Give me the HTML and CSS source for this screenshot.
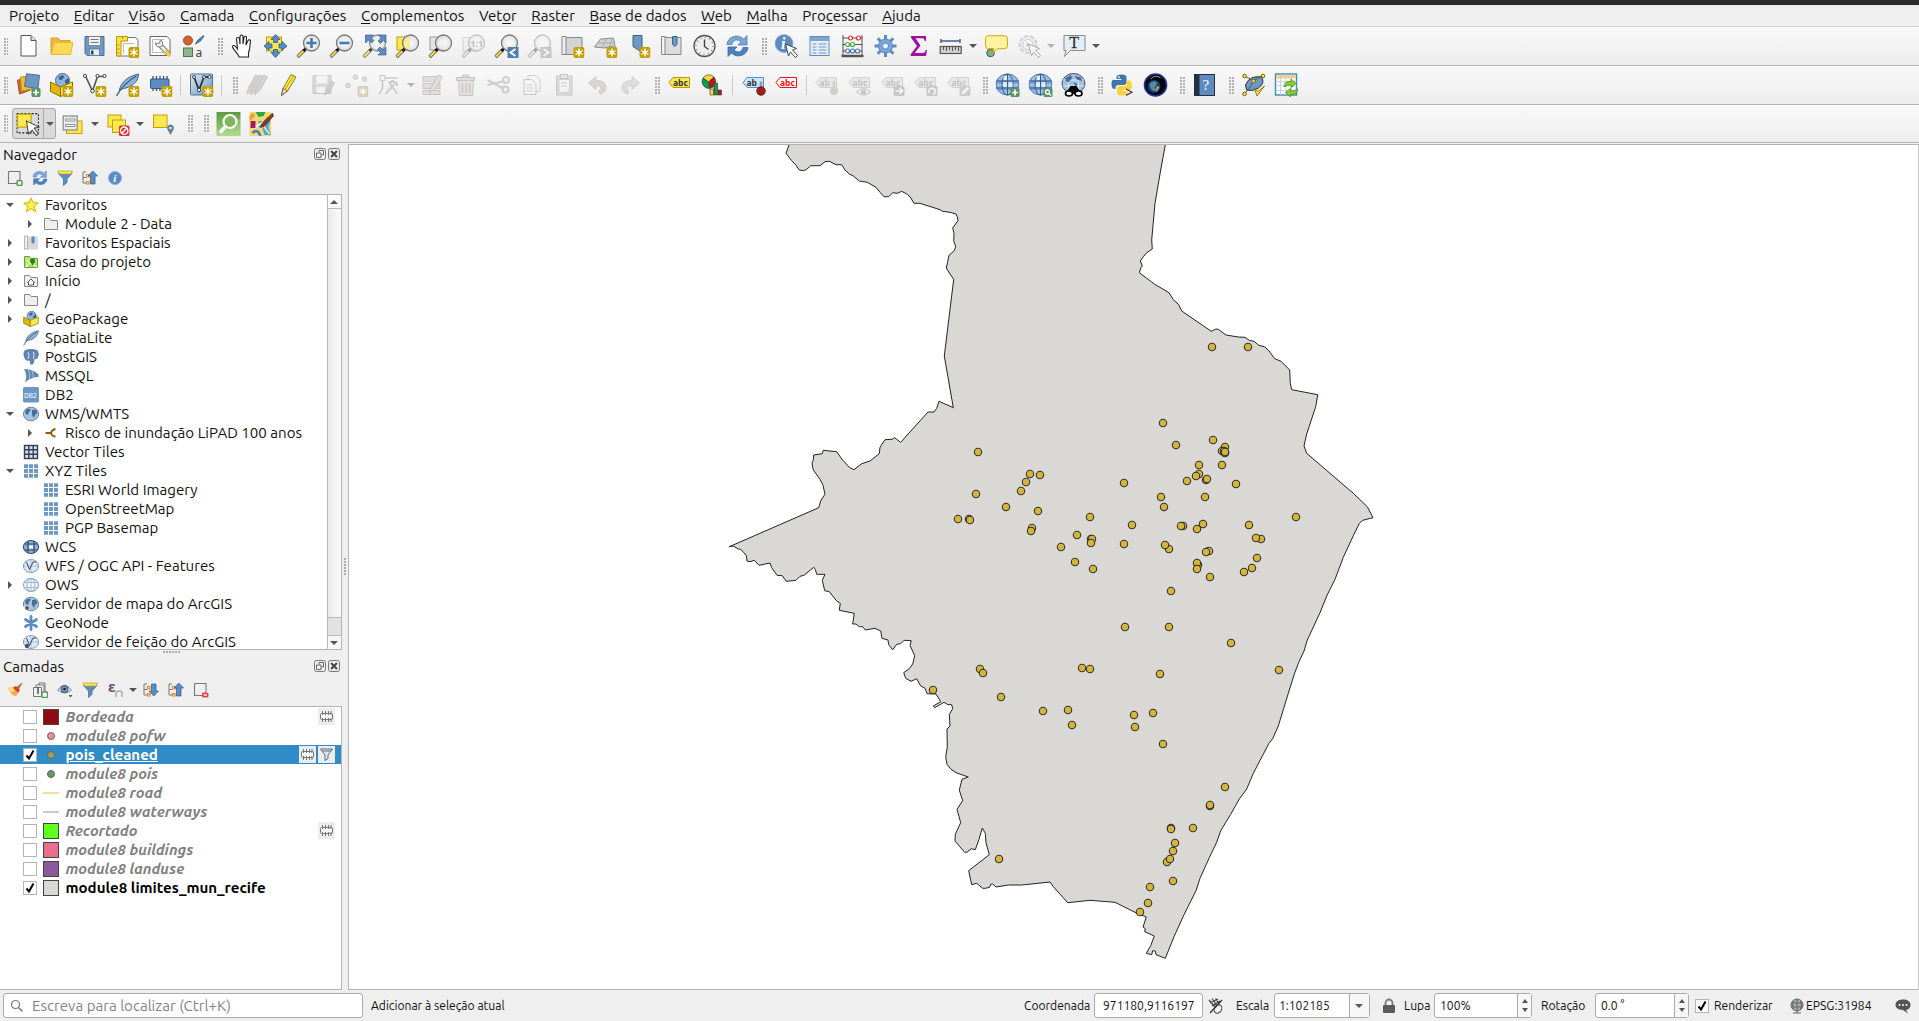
FILE: index.html
```html
<!DOCTYPE html>
<html lang="pt-BR">
<head>
<meta charset="utf-8">
<title>QGIS</title>
<link rel="stylesheet" href="styles.css">
</head>
<body>
<svg class="paints" width="0" height="0" aria-hidden="true">
  <defs>
    <linearGradient id="gBlue" x1="0" y1="0" x2="1" y2="1"><stop offset="0" stop-color="#dce9f5"/><stop offset="1" stop-color="#6d97c4"/></linearGradient>
    <radialGradient id="gLens"><stop offset="0" stop-color="#fff"/><stop offset="1" stop-color="#dcdcdc"/></radialGradient>
    <linearGradient id="gGreen" x1="0" y1="0" x2="0" y2="1"><stop offset="0" stop-color="#5d9b3e"/><stop offset="1" stop-color="#a3d57c"/></linearGradient>
  </defs>
</svg>
<svg class="defs" aria-hidden="true">
  <!-- shared parts -->
  <symbol id="star-badge" viewBox="0 0 24 24"><rect x="13" y="13" width="11" height="11" rx="2" fill="#c4a000"/><path d="M18.500 14.500v8M15 16.500l7 4M22 16.500l-7 4" stroke="#fff" stroke-width="1.400"/><circle cx="18.500" cy="18.500" r="1.800" fill="#fff"/></symbol>
  <symbol id="lens" viewBox="0 0 24 24"><path d="M1 23l7-7" stroke="#555" stroke-width="3.600"/><path d="M1.500 22.500l6-6" stroke="#fcd94a" stroke-width="2"/><path d="M7 17l3-3" stroke="#111" stroke-width="3"/><circle cx="15" cy="9" r="8" fill="url(#gLens)" fill-opacity=".85" stroke="#777" stroke-width="1.300"/></symbol>
  <symbol id="cursor" viewBox="0 0 24 24"><path d="M11 10l11 4.500-4 1.500 5 5.500-2 2-5-5.500-2 4z" fill="#fff" stroke="#444" stroke-width="1"/></symbol>
  <symbol id="tag" viewBox="0 0 24 24"><path d="M1.500 9.500l4-5H22v10H5.500z"/></symbol>

  <!-- project toolbar -->
  <symbol id="i-new" viewBox="0 0 24 24"><path d="M4.500 1.500h10l5 5v15.500h-15z" fill="#fff" stroke="#555"/><path d="M14.500 1.500v5h5" fill="#ddd" stroke="#555"/></symbol>
  <symbol id="i-open" viewBox="0 0 24 24"><path d="M1.500 20V4h7l2 2.500h10V9" fill="#e8b647" stroke="#d9a520"/><path d="M1.500 20.500L5 8.500h18.500l-2.500 12z" fill="#fcd956" stroke="#e6b93a"/></symbol>
  <symbol id="i-save" viewBox="0 0 24 24"><path d="M2.500 2.500h19v19h-17l-2-2z" fill="#6d97c4" stroke="#4b7198"/><rect x="6" y="2.500" width="12" height="9" fill="#f2f2f2" stroke="#666" stroke-width=".6"/><path d="M8 5.500h8M8 8.500h8" stroke="#777"/><rect x="7" y="15" width="10" height="6.500" fill="#e8eef5" stroke="#4b7198" stroke-width=".7"/><rect x="8.500" y="16.500" width="2.500" height="4" fill="#345"/></symbol>
  <symbol id="i-layout" viewBox="0 0 24 24"><path d="M7 3.500h13l2.500 3V22H2" fill="#fff" stroke="#777"/><path d="M8 9.500h11M8 9.500v10" stroke="#bbb" fill="none"/><path d="M1 2.500h11v4.500H5.500V22H1z" fill="#fde047" stroke="#b8960b"/><path d="M1 11h3M1 15h3M1 19h3M7 2.500v2.500" stroke="#b8960b"/><use href="#star-badge"/></symbol>
  <symbol id="i-layoutmgr" viewBox="0 0 24 24"><path d="M1.500 2.500h17l3 3V21.500h-20z" fill="#fff" stroke="#666"/><path d="M4 5.500h12M4 5.500v13h14" fill="none" stroke="#a9bddb"/><path d="M11 10.500l9 9.500" stroke="#777" stroke-width="5"/><path d="M11 10.500l9 9.500" stroke="#eee" stroke-width="3"/><path d="M16.500 16.500l5 5.500" stroke="#f0c850" stroke-width="4"/><path d="M7 9a4 4 0 006 3.500A4 4 0 0012 6l-1 3-2 .5-2-.500" fill="#eee" stroke="#777"/></symbol>
  <symbol id="i-style" viewBox="0 0 24 24"><circle cx="6.500" cy="6.500" r="4.500" fill="#d2622f" stroke="#a74a20"/><path d="M14 10l2.500-4L22 1.500l.5.500-3.500 5z" fill="#5b8bc0" stroke="#3c6591"/><rect x="2" y="14" width="9" height="8.500" fill="#8cb48e" stroke="#4d7550"/><text x="14" y="22.500" class="glyph" font-size="12" fill="#444">a</text></symbol>

  <!-- navigation toolbar -->
  <symbol id="i-pan" viewBox="0 0 24 24"><path d="M8.500 23c-.5-3-5.500-7-6.500-10 0-2 2-2 3-.5L7 15 6 5c0-2 2.500-2 3 0l.500 5V2.500c0-2 3-2 3 0V10l1-6.500c.5-2 3-1.500 2.500.500L15.500 11l2-4.500c1-1.500 3-.5 2.500 1C19 12 20 14 18 18.500V23z" fill="#fff" stroke="#222" stroke-width="1.100"/></symbol>
  <symbol id="i-pansel" viewBox="0 0 24 24"><rect x="3" y="3" width="15" height="14" fill="#fce94f" stroke="#c4a000"/><g fill="#5b8bc0" stroke="#2d5a8c" stroke-width=".8"><path d="M12 .5l4.500 5H14v3h-4v-3H7.500zM12 23.500l4.500-5H14v-3h-4v3H7.500zM.5 12l5-4.500V10h3v4h-3v2.500zM23.500 12l-5-4.500V10h-3v4h3v2.500z"/></g></symbol>
  <symbol id="i-zin" viewBox="0 0 24 24"><use href="#lens"/><path d="M15 4v10M10 9h10" stroke="#4579ad" stroke-width="2.600"/></symbol>
  <symbol id="i-zout" viewBox="0 0 24 24"><use href="#lens"/><path d="M10 9h10" stroke="#4579ad" stroke-width="2.600"/></symbol>
  <symbol id="i-zfull" viewBox="0 0 24 24"><use href="#lens" opacity=".8"/><g fill="#5b8bc0" stroke="#3a6695" stroke-width=".7"><path d="M3 1h8L8.500 3.500l3 3-2.500 2.500-3-3L3 9zM23.500 1v8L21 6.500l-3 3L15.500 7l3-3L16 1zM23.500 21h-8l2.500-2.500-3-3 2.500-2.500 3 3 3-3z"/></g></symbol>
  <symbol id="i-zsel" viewBox="0 0 24 24"><rect x="1.500" y="3" width="13" height="13" fill="#fce94f" stroke="#c4a000"/><use href="#lens"/><path d="M14 4a5.500 5.500 0 000 11z" fill="#f8ec80" opacity=".8"/></symbol>
  <symbol id="i-zlayer" viewBox="0 0 24 24"><rect x="1.500" y="3" width="13" height="13" fill="#e4e4e4" stroke="#999"/><use href="#lens"/></symbol>
  <symbol id="i-znative" viewBox="0 0 24 24"><path d="M1.500 3.500h12v14h-12z" fill="#e8e8e8" stroke="#aaa"/><use href="#lens"/><text x="9" y="12.500" class="glyph bold" font-size="9" fill="#666">1:1</text></symbol>
  <symbol id="i-zlast" viewBox="0 0 24 24"><use href="#lens"/><rect x="13" y="13" width="11" height="11" fill="#4f7fb0"/><path d="M21 15l-5 3.500 5 3.500" fill="none" stroke="#fff" stroke-width="1.800"/></symbol>
  <symbol id="i-znext" viewBox="0 0 24 24"><use href="#lens"/><rect x="13" y="13" width="11" height="11" fill="#888"/><path d="M16 15l5 3.500-5 3.500" fill="none" stroke="#fff" stroke-width="1.800"/></symbol>
  <symbol id="i-newmap" viewBox="0 0 24 24"><path d="M5 3.500h16.500v17H5z" fill="#d3d3d3" stroke="#888"/><path d="M1.500 2.500h4v18h-4z" fill="#eee" stroke="#888"/><use href="#star-badge"/></symbol>
  <symbol id="i-new3d" viewBox="0 0 24 24"><path d="M7 5l13-1 2 11-3-3-8 2-10-1z" fill="#d3d3d3" stroke="#888"/><path d="M4 9l17 0M13 4l-4 9M18 5l-2 8" stroke="#aaa"/><use href="#star-badge"/></symbol>
  <symbol id="i-newbm" viewBox="0 0 24 24"><path d="M6.500 1.500h9v17l-4.500-3-4.500-3z" fill="#6d97c4" stroke="#3f5f85"/><use href="#star-badge"/></symbol>
  <symbol id="i-bm" viewBox="0 0 24 24"><path d="M5 3.500h16.500v17H5z" fill="#dcdcdc" stroke="#888"/><path d="M2 2.500h3.500v18H2z" fill="#f4f4f4" stroke="#888"/><path d="M13 2.500h4.500v8L15 12.500l-2-2z" fill="#6d97c4" stroke="#3a6695"/></symbol>
  <symbol id="i-clock" viewBox="0 0 24 24"><circle cx="12" cy="12" r="10.500" fill="#eee" stroke="#555" stroke-width="1.300"/><circle cx="12" cy="12" r="8.500" fill="none" stroke="#5b8bc0" stroke-width="1.600" stroke-dasharray="1 3.450"/><path d="M12 5.500V12.500l4 3" fill="none" stroke="#444" stroke-width="1.400"/></symbol>
  <symbol id="i-refresh" viewBox="0 0 24 24"><path d="M1.500 10.500C2 3 12-1 18 5l3.500-3.500v9.500h-9l3-3C12 4.500 7 6 6.500 10.500z" fill="#7aa6d8" stroke="#4d7fb5" stroke-width=".8"/><path d="M22.500 13.500C22 21 12 25 6 19l-3.500 3.500v-9.500h9l-3 3c3.500 3.500 8.500 2 9-2.500z" fill="#4b82bf" stroke="#3568a5" stroke-width=".8"/></symbol>

  <!-- attributes toolbar -->
  <symbol id="i-info" viewBox="0 0 24 24"><circle cx="9.500" cy="9.500" r="8.800" fill="#5b8bc0" stroke="#7aa2ce"/><text x="6.500" y="15" class="glyph-serif bold it" font-size="16" fill="#fff">i</text><use href="#cursor"/></symbol>
  <symbol id="i-table" viewBox="0 0 24 24"><rect x="2.500" y="2.500" width="19" height="19" fill="#e5f0fa" stroke="#5b8bc0"/><path d="M2.500 5h19" stroke="#7da5cf" stroke-width="4"/><path d="M5 10h4M11 10h8M5 13h4M11 13h8M5 16h4M11 16h8M5 19h4M11 19h8" stroke="#6d97c4"/></symbol>
  <symbol id="i-abacus" viewBox="0 0 24 24"><path d="M2.500 1v22M21.500 1v22M2 4h20M2 10.500h20M2 17h20" stroke="#555"/><path d="M1 22h22" stroke="#555" stroke-width="2.500"/><g fill="#fff" stroke-width="1.200"><g stroke="#d33"><circle cx="10" cy="4" r="2"/><circle cx="18" cy="4" r="2"/></g><g stroke="#4a4"><circle cx="7" cy="10.500" r="2"/><circle cx="12" cy="10.500" r="2"/></g><g stroke="#47a"><circle cx="7" cy="17" r="2"/><circle cx="12" cy="17" r="2"/><circle cx="17" cy="17" r="2"/></g></g></symbol>
  <symbol id="i-gear" viewBox="0 0 24 24"><path d="M12 1v22M1 12h22M4.200 4.200l15.600 15.600M19.800 4.200L4.200 19.800" stroke="#5b8bc0" stroke-width="3"/><circle cx="12" cy="12" r="7" fill="#7aa6d8" stroke="#5b8bc0"/><circle cx="12" cy="12" r="3" fill="#eef3f9" stroke="#5b8bc0"/></symbol>
  <symbol id="i-sum" viewBox="0 0 24 24"><path d="M4.500 2h15v5h-1.200c-.5-2-1-2.700-3-2.700H9L14 11.500 8.200 19H16c2 0 2.800-1 3.300-3h1.200L19.500 22H4.200v-1.800L10.500 12 4.500 3.800z" fill="#a0119f"/></symbol>
  <symbol id="i-measure" viewBox="0 0 24 24"><path d="M1.500 7h19M1.500 5v4M20.500 5v4" stroke="#3a6695" stroke-width="1.500"/><rect x=".7" y="12.500" width="21" height="7" fill="#d0d0d0" stroke="#555" stroke-width="1.200"/><path d="M4 13v3M7 13v4M10 13v3M13 13v4M16 13v3M19 13v4" stroke="#555"/></symbol>
  <symbol id="i-tip" viewBox="0 0 24 24"><circle cx="6" cy="19" r="3.800" fill="#7fb07f" stroke="#555"/><path d="M4 1.700h15.500q3.500 0 3.500 3v7q0 3-3.500 3H13L8.500 19l1-4.300H4q-3 0-3-3v-7q0-3 3-3z" fill="#fcf3a0" stroke="#d0a800"/></symbol>
  <symbol id="i-action" viewBox="0 0 24 24"><circle cx="10.500" cy="10.500" r="8.500" fill="#ddd" stroke="#999" stroke-width="2" stroke-dasharray="4 2"/><circle cx="10.500" cy="10.500" r="5" fill="#fff" stroke="#999"/><path d="M9 8l4 2.500L9 13z" fill="#888"/><use href="#cursor"/></symbol>
  <symbol id="i-text" viewBox="0 0 24 24"><path d="M1.500 1.500h21v15H8l-6 6 1.500-6h-2z" fill="#e6eff6" stroke="#888"/><text x="6.800" y="14" class="glyph-serif" font-size="16" fill="#333" stroke="#333" stroke-width=".3">T</text></symbol>

  <!-- data source toolbar -->
  <symbol id="i-dsm" viewBox="0 0 24 24"><path d="M1 7l11-1 2 11-11 4z" fill="#d2622f" stroke="#a74a20"/><path d="M4 4l11-1 1 13-11 2z" fill="#f0c030" stroke="#b8960b"/><path d="M10 .8l13 1.500-1.500 13L8 13.500z" fill="#6d97c4" stroke="#4b7198"/><rect x="15" y="15" width="9" height="9" rx="1.500" fill="#589660"/><path d="M19.500 16.500v6M16.500 19.500h6" stroke="#fff" stroke-width="1.600"/></symbol>
  <symbol id="i-gpkg" viewBox="0 0 24 24"><circle cx="13" cy="7.500" r="7" fill="#8fb3da" stroke="#4b6d92"/><path d="M9 4l4-2 2 2-3 3-2 0zM15 8l4-3 1 4-3 3z" fill="#3f6186"/><path d="M1 9l10 5v9.500L1 18.500z" fill="#e0b800" stroke="#8a6f00"/><path d="M11 14l12-5v9.500l-12 5z" fill="#fce94f" stroke="#8a6f00"/></symbol>
  <symbol id="i-newgpkg" viewBox="0 0 24 24"><use href="#i-gpkg"/><use href="#star-badge"/></symbol>
  <symbol id="i-shp" viewBox="0 0 24 24"><path d="M3 3l7 15L15 3.500h7" fill="none" stroke="#555" stroke-width="1.600"/><g fill="#fff" stroke="#345" stroke-width="1"><circle cx="2.500" cy="2.800" r="1.600"/><circle cx="15" cy="3" r="1.600"/><circle cx="22" cy="3" r="1.600"/><circle cx="10" cy="18" r="1.800"/></g><use href="#star-badge"/></symbol>
  <symbol id="i-feather" viewBox="0 0 24 24"><path d="M4 17C5 11 10 4 23 1c0 7-6 13-15 14.500z" fill="#8fb3da" stroke="#3f5f85"/><path d="M1 23C6 14 12 8 21 3" fill="none" stroke="#3f5f85" stroke-width="1.400"/></symbol>
  <symbol id="i-newfeather" viewBox="0 0 24 24"><use href="#i-feather"/><use href="#star-badge"/></symbol>
  <symbol id="i-mem" viewBox="0 0 24 24"><path d="M4.500 3v15M8 3v15M11.500 3v15M15 3v15M18.500 3v15" stroke="#444" stroke-width="1.200"/><rect x="2" y="6" width="18.500" height="9.500" rx="1" fill="#5b8bc0" stroke="#33567d"/><use href="#star-badge"/></symbol>
  <symbol id="i-virtual" viewBox="0 0 24 24"><rect x="1" y="1" width="22" height="21" rx="1" fill="url(#gBlue)" stroke="#4b7198"/><path d="M4.500 4l5 13L14.500 4H20" fill="none" stroke="#333" stroke-width="1.800"/><g fill="#fff" stroke="#345"><circle cx="4.500" cy="4" r="1.500"/><circle cx="14.500" cy="4" r="1.500"/><circle cx="20" cy="4" r="1.500"/><circle cx="9.500" cy="17" r="1.700"/></g><use href="#star-badge"/></symbol>

  <!-- digitizing toolbar -->
  <symbol id="i-pencil" viewBox="0 0 24 24"><path d="M3 22.500l1.500-7L12.500 1.500l5 2.500-8.500 14z" fill="#fce94f" stroke="#8a7a20"/><path d="M4.500 15.500l4.500 2.500-6 4.500z" fill="#f3e1b8" stroke="#665"/><path d="M6.500 16.500L15 2.800" stroke="#c4a000"/></symbol>
  <symbol id="i-pencils" viewBox="0 0 24 24"><g fill="#b0a09c" stroke="#857a78"><path d="M1.500 21l1.500-6L10 2l4 2-7.500 13z"/><path d="M5 22l1.500-6L14 2l4 2-7.500 13z"/><path d="M9 22l1.500-6L18 2l4 2-7.500 13z"/></g></symbol>
  <symbol id="i-savedit" viewBox="0 0 24 24"><path d="M1.500 2.500h18v18h-18z" fill="#b4b0b0" stroke="#888"/><rect x="5" y="2.500" width="11" height="8" fill="#f2f2f2"/><rect x="5" y="14" width="9" height="6" fill="#f2f2f2"/><path d="M13 22l1.500-5L20 8l3 2-5.500 9z" fill="#a89490" stroke="#857a78"/></symbol>
  <symbol id="i-points" viewBox="0 0 24 24"><g fill="#bbb" stroke="#888"><circle cx="3.500" cy="12.500" r="2.300"/><circle cx="11" cy="4" r="2.300"/><circle cx="20" cy="6" r="2.300"/></g><use href="#star-badge"/></symbol>
  <symbol id="i-vertex" viewBox="0 0 24 24"><path d="M4 5h16M5 5v10L2 21" stroke="#888" fill="none" stroke-width="1.500"/><rect x="2.500" y="2.500" width="5" height="5" fill="#eee" stroke="#888"/><path d="M8 21l9-10M12 10l8 11" stroke="#999" stroke-width="2"/><path d="M11 10l4-2 4 2 1 3" stroke="#888" stroke-width="2" fill="none"/></symbol>
  <symbol id="i-multi" viewBox="0 0 24 24"><g fill="#c4c0b8" stroke="#888"><rect x="2.500" y="3.500" width="17" height="5"/><rect x="2.500" y="10.500" width="17" height="5"/><rect x="2.500" y="17.500" width="17" height="4"/></g><path d="M9 20l1.500-5L18 2l4 2-7.500 12z" fill="#ccc2be" stroke="#857a78"/></symbol>
  <symbol id="i-trash" viewBox="0 0 24 24"><path d="M5 7.500h15l-1 15H6z" fill="#dcc8c6" stroke="#8d7b7a"/><path d="M3 4.500h18v3H3zM9 4v-2h6v2" fill="#d0bab8" stroke="#8d7b7a"/><path d="M9 10v10M12.500 10v10M16 10v10" stroke="#8d7b7a" stroke-width="1.300"/></symbol>
  <symbol id="i-cut" viewBox="0 0 24 24"><path d="M1 7l15 8M1 12l17-4" stroke="#999" stroke-width="2"/><circle cx="19.500" cy="7" r="3" fill="none" stroke="#999" stroke-width="2"/><circle cx="19" cy="16.500" r="3" fill="none" stroke="#999" stroke-width="2"/></symbol>
  <symbol id="i-copy" viewBox="0 0 24 24"><path d="M8.500 2.500h8l4 4v12h-12z" fill="#f6f6f6" stroke="#999"/><path d="M4.500 6.500h8l4 4v11h-12z" fill="#f6f6f6" stroke="#888"/><path d="M7 12h6M7 15h7M7 18h7" stroke="#999"/></symbol>
  <symbol id="i-paste" viewBox="0 0 24 24"><rect x="4" y="3" width="15.500" height="19" fill="#bbb" stroke="#888"/><path d="M6.500 6.500h10.500v10l-3 3H6.500z" fill="#f6f6f6" stroke="#999"/><rect x="8" y="1.500" width="7" height="4" fill="#ccc" stroke="#888"/><path d="M8.500 10h6M8.500 13h6" stroke="#999"/></symbol>
  <symbol id="i-undo" viewBox="0 0 24 24"><path d="M3 10l7.500-6.500v4c7 0 10 3 10 7 0 3-2 6-6 6.500l-1-3.500c3-.5 3.500-5-3-5v4z" fill="#b5a9a2" stroke="#9c918a"/></symbol>
  <symbol id="i-redo" viewBox="0 0 24 24"><path d="M21 10l-7.500-6.500v4c-7 0-10 3-10 7 0 3 2 6 6 6.500l1-3.500c-3-.5-3.500-5 3-5v4z" fill="#b6bab6" stroke="#9a9e9a"/></symbol>

  <!-- label toolbar -->
  <symbol id="i-abc" viewBox="0 0 24 24"><use href="#tag" fill="#fce94f" stroke="#b8960b"/><text x="5.500" y="12.500" class="glyph bold" font-size="8.500" fill="#333">abc</text></symbol>
  <symbol id="i-chart" viewBox="0 0 24 24"><path d="M8 9l-5.500-4A7 7 0 0113.500 4z" fill="#fdd835" stroke="#333" stroke-width=".6"/><path d="M8 9L13.500 4A7 7 0 019 15.500z" fill="#c01818" stroke="#333" stroke-width=".6"/><path d="M8 9l1 6.500A7 7 0 012.500 5z" fill="#0aa04a" stroke="#333" stroke-width=".6"/><path d="M9.500 16h3.500v6H9.500z" fill="#fdd835" stroke="#333" stroke-width=".6"/><path d="M13.500 10H17v12h-3.500z" fill="#0aa04a" stroke="#333" stroke-width=".6"/><path d="M17.500 17H21v5h-3.500z" fill="#c01818" stroke="#333" stroke-width=".6"/></symbol>
  <symbol id="i-pin" viewBox="0 0 24 24"><use href="#tag" fill="#cfe3fa" stroke="#4a90d9"/><text x="5" y="12.500" class="glyph bold" font-size="8.500" fill="#333">ab</text><path d="M19.500 8.500v8" stroke="#999" stroke-width="2.500"/><circle cx="19.500" cy="18" r="4.200" fill="#a02020" stroke="#701515"/></symbol>
  <symbol id="i-unpl" viewBox="0 0 24 24"><use href="#tag" fill="#fff" stroke="#e11"/><text x="5.500" y="12.500" class="glyph bold" font-size="8.500" fill="#e11">abc</text></symbol>
  <symbol id="i-lpin" viewBox="0 0 24 24"><use href="#tag" fill="#d8d8c4" stroke="#a0a090"/><text x="5" y="12.500" class="glyph bold" font-size="8.500" fill="#777">ab</text><path d="M19.500 8v8" stroke="#999" stroke-width="2.500"/><circle cx="19.500" cy="18" r="4" fill="#a89494"/></symbol>
  <symbol id="i-leye" viewBox="0 0 24 24"><use href="#tag" fill="#d8d8c4" stroke="#a0a090"/><text x="5" y="12.500" class="glyph bold" font-size="8.500" fill="#777">abc</text><path d="M9 19q7-7 14 0-7 6-14 0z" fill="#eee" stroke="#777"/><circle cx="16" cy="19" r="2.500" fill="#888"/></symbol>
  <symbol id="i-lmove" viewBox="0 0 24 24"><use href="#tag" fill="#d8d8c4" stroke="#a0a090"/><text x="5" y="12.500" class="glyph bold" font-size="8.500" fill="#777">abc</text><rect x="13" y="13" width="11" height="10" rx="1.500" fill="#888"/><path d="M15 18h7M19 15l3 3-3 3" stroke="#fff" stroke-width="1.600" fill="none"/></symbol>
  <symbol id="i-lrot" viewBox="0 0 24 24"><use href="#tag" fill="#d8d8c4" stroke="#a0a090"/><text x="5" y="12.500" class="glyph bold" font-size="8.500" fill="#777">abc</text><rect x="13" y="13" width="11" height="10" rx="1.500" fill="#888"/><path d="M16 20a3.200 3.200 0 113 1.500" stroke="#fff" stroke-width="1.600" fill="none"/></symbol>
  <symbol id="i-ledit" viewBox="0 0 24 24"><use href="#tag" fill="#d8d8c4" stroke="#a0a090"/><text x="5" y="12.500" class="glyph bold" font-size="8.500" fill="#777">abc</text><rect x="13" y="13" width="11" height="10" rx="1.500" fill="#999"/><path d="M15 21.500l1-3 5-4.500 1.500 1.500-4.500 5z" fill="#fff"/></symbol>

  <!-- web and plugins -->
  <symbol id="i-globe" viewBox="0 0 24 24"><ellipse cx="12" cy="11.500" rx="11.500" ry="10.500" fill="#9cc0e8" stroke="#4b7ab0"/><path d="M1 9h22M1 15.500h22" stroke="#5a8cc8" stroke-width="3.500" opacity=".6"/><g fill="none" stroke="#3c5f8b"><ellipse cx="12" cy="11.500" rx="5.500" ry="10.500"/><path d="M12 1v21M1 8h22M1 15h22"/></g><path d="M7.500 9h4v5h-4zM13 9h4v5h-4zM8 3h3.500v4H8z" fill="#fff" opacity=".75"/></symbol>
  <symbol id="i-webadd" viewBox="0 0 24 24"><use href="#i-globe"/><rect x="15" y="15" width="9" height="9" rx="1.500" fill="#589660"/><path d="M19.500 16.500v6M16.500 19.500h6" stroke="#fff" stroke-width="1.700"/></symbol>
  <symbol id="i-websearch" viewBox="0 0 24 24"><use href="#i-globe"/><rect x="15" y="15" width="9" height="9" rx="1.500" fill="#589660"/><circle cx="19" cy="19" r="2" fill="none" stroke="#fff" stroke-width="1.300"/><path d="M20.500 20.500l2 2" stroke="#fff" stroke-width="1.400"/></symbol>
  <symbol id="i-bino" viewBox="0 0 24 24"><ellipse cx="12" cy="10.500" rx="11.500" ry="10" fill="#a4c0e0" stroke="#334e6d"/><path d="M1 7h22M1 13h22M7 2v17M17 2v17" stroke="#dce8f5"/><path d="M4 5l5-3 2 3-4 4-3-1zM13 3l6 1 2 4-5-1zM12 9l4 2-2 3z" fill="#4a6d96"/><path d="M5 19l4-6h6l4 6v2H5z" fill="#000"/><g fill="#fff" stroke="#000" stroke-width="1.600"><ellipse cx="7.500" cy="20.500" rx="3.500" ry="2.500"/><ellipse cx="17" cy="20.500" rx="3.500" ry="2.500"/></g></symbol>
  <symbol id="i-python" viewBox="0 0 24 24"><path d="M6 6V4q0-2.500 5-2.500T16 4v5q0 3-3 3H8q-3 0-3 3v1H4q-3 0-3-5t3-4h7V6z" fill="#3f78a8"/><circle cx="8.500" cy="4.200" r=".9" fill="#fff"/><path d="M16 7.500h2q3.500 0 3.500 5T18 17h-6v1h5v2q0 2-5 2.500T6.500 20v-4q0-3 3-3H14q2.500 0 2.500-3z" fill="#fcd23c"/><path d="M15.500 16l6 3.200-6 3.200" fill="none" stroke="#444" stroke-width="1.300"/></symbol>
  <symbol id="i-earth" viewBox="0 0 24 24"><circle cx="12" cy="12" r="11" fill="#05070f" stroke="#27318a" stroke-width="1.600"/><circle cx="10.500" cy="13.500" r="6.500" fill="#173e6e"/><path d="M6 11q3-4 7-2 1 3-2 5l3 4q-5 1-7-3z" fill="#5b87a0"/><path d="M13 13l3 1-3 5z" fill="#c0b060"/><path d="M7 6q5-5 10-1" stroke="#8b95a8" fill="none"/></symbol>
  <symbol id="i-help" viewBox="0 0 24 24"><rect x="2" y="1.500" width="20" height="21" fill="#5f8cc0" stroke="#23303f"/><path d="M2 1.500h5v21H2z" fill="#23303f"/><text x="10" y="17" class="glyph-serif" font-size="15" fill="#fff">?</text></symbol>
  <symbol id="i-topo" viewBox="0 0 24 24"><path d="M4 12Q8 2 20 4q4 6-3 11-6 4-12 2z" fill="#6d97c4" stroke="#333"/><path d="M3 3l9 5 9-6M3 21l5-6 4-7" stroke="#555" fill="none"/><g fill="#fce94f" stroke="#776500"><circle cx="3" cy="3" r="1.800"/><circle cx="21.500" cy="3" r="1.800"/><circle cx="12" cy="8" r="1.800"/><circle cx="3" cy="21" r="1.800"/></g><path d="M13 15.500l2.500 7.500 7.500-10-6.500 5.500z" fill="#fce94f" stroke="#776500" stroke-width=".8"/></symbol>
  <symbol id="i-sheet" viewBox="0 0 24 24"><rect x="1" y="1" width="21" height="21" fill="#fff" stroke="#3a8cb8" stroke-width="1.400"/><path d="M1.500 3.800h20" stroke="#fcd08a" stroke-width="3.500"/><path d="M1 8.500h21M1 13h21M1 17.500h21M6 1v21M11.500 1v21M17 1v21" stroke="#a8cce2" stroke-width=".8"/><path d="M9.500 14q0-6 7-5.500V6l5 4.500-5 4V12q-4-.5-7 2zM23 16q0 6-7 5.500V24l-5-4.500 5-4V18q4 .5 7-2z" fill="#8ad028" stroke="#4b8b10" stroke-width=".8"/></symbol>

  <!-- selection toolbar -->
  <symbol id="i-select" viewBox="0 0 24 24"><rect x="1.500" y="2.500" width="20.500" height="18.500" fill="none" stroke="#222" stroke-dasharray="2 1.500"/><rect x="2" y="3" width="13" height="12.500" fill="#fce94f" stroke="#c4a000"/><path d="M10.500 9.500l12 6-4.500 1 4 5.500-2 1.500-4-5-3.500 3.500z" fill="#fff" stroke="#444"/></symbol>
  <symbol id="i-selform" viewBox="0 0 24 24"><rect x="5" y="9" width="15.500" height="12.500" fill="#fce94f" stroke="#c4a000"/><rect x="1.700" y="4" width="14" height="14" fill="#e8ecf0" stroke="#888" stroke-width="1.200"/><path d="M4 7h9.500v2H4zM4 12.500h9.500v2H4z" fill="#fff" stroke="#777" stroke-width=".8"/></symbol>
  <symbol id="i-desel" viewBox="0 0 24 24"><rect x="1.500" y="3" width="13" height="12" fill="#fce94f" stroke="#c4a000"/><rect x="6" y="8" width="13" height="12.500" fill="#fce94f" stroke="#c4a000"/><rect x="12.500" y="13.500" width="10.500" height="10.500" rx="1.500" fill="#d8313c"/><circle cx="17.700" cy="18.700" r="3.700" fill="none" stroke="#fff" stroke-width="1.400"/><path d="M15.200 21.200l5-5" stroke="#fff" stroke-width="1.400"/></symbol>
  <symbol id="i-selloc" viewBox="0 0 24 24"><rect x="2" y="3" width="13.500" height="12.500" fill="#fce94f" stroke="#c4a000"/><path d="M19 23l-3-5.500a3.400 3.400 0 116 0z" fill="#5b7f9c"/><circle cx="19" cy="16" r="1.300" fill="#dde8f0"/></symbol>
  <symbol id="i-qms" viewBox="0 0 24 24"><rect width="24" height="24" fill="url(#gGreen)"/><path d="M0 20L24 6v18H0z" fill="#fff" opacity=".15"/><circle cx="13.500" cy="9.500" r="6.500" fill="#7fb85c" stroke="#fff" stroke-width="2.200"/><path d="M9 14.500L3.500 20.500" stroke="#fff" stroke-width="3.400"/></symbol>
  <symbol id="i-osm" viewBox="0 0 24 24"><rect width="21.500" height="24" fill="#f7d86a"/><path d="M9 9h5l4-4 3 4-2 6 2.500 8H15l-2-6-4-2z" fill="#4fa5e8"/><path d="M0 4l3-3 3 2-3 4-3 2z" fill="#e8a040"/><path d="M0 12q5-1 6 3l8-5" stroke="#fff" stroke-width="1.500" fill="none"/><path d="M1 9h5v7H1z" fill="#a11b5c"/><path d="M6 0h10l-2 4-5 1z" fill="#2aa64a"/><path d="M3 21q5-5 8 3" stroke="#3c7fd0" stroke-width="2.500" fill="none"/><path d="M11 17l3-3 6 8" stroke="#fbe9a0" stroke-width="1.500" fill="none"/><path d="M23 1L12 12l-1 3.500 3.500-1L24 4z" fill="#8c3b16" stroke="#4b1d08" stroke-width=".6"/></symbol>

  <!-- 16px panel icons -->
  <symbol id="s-addl" viewBox="0 0 16 16"><path d="M1.500 1.500h11.500v9M9.500 13.500h-8v-12" fill="none" stroke="#777" stroke-width="1.100"/><rect x="10" y="10.500" width="5" height="5" rx="1.500" fill="#eef6ee" stroke="#589660" stroke-width="1.500"/></symbol>
  <symbol id="s-filter" viewBox="0 0 16 16"><path d="M1.500 3.500L6.500 9v6.500l3.500-3V9l5-5.500z" fill="#5f8cc0" stroke="#4b7198" stroke-width=".8"/><path d="M1 1h14.500l-1.500 3H2.500z" fill="#fce94f" stroke="#b8a030" stroke-width=".7"/></symbol>
  <symbol id="s-collapse" viewBox="0 0 16 16"><path d="M1 2v11h3M1 2h3M1 7.500h3" stroke="#777" fill="none"/><path d="M4.500 4.500h2.500v2.500H4.500zM4.500 11.500h2.500v2.500H4.500z" fill="#fff" stroke="#f08020" stroke-width="1.200"/><path d="M10.800 1L15.500 6H13v8H8.500V6H6z" fill="#5b8bc0" stroke="#2d5a8c" stroke-width=".7"/></symbol>
  <symbol id="s-expand" viewBox="0 0 16 16"><path d="M1 2v11h3M1 2h3M1 7.500h3" stroke="#777" fill="none"/><path d="M4.500 4.500h2.500v2.500H4.500zM4.500 11.500h2.500v2.500H4.500z" fill="#fff" stroke="#f08020" stroke-width="1.200"/><path d="M10.800 14L15.500 9H13V2H8.500v7H6z" fill="#5b8bc0" stroke="#2d5a8c" stroke-width=".7"/></symbol>
  <symbol id="s-info" viewBox="0 0 16 16"><circle cx="8" cy="8" r="6.500" fill="#5b8bc0" stroke="#8db2dc"/><text x="6.200" y="12" class="glyph-serif bold it" font-size="11" fill="#fff">i</text></symbol>
  <symbol id="s-star" viewBox="0 0 16 16"><path d="M8 .8l2 5 5.300.2-4.200 3.400 1.500 5.300L8 11.700l-4.600 3 1.500-5.300L.7 6l5.300-.2z" fill="#fdf04f" stroke="#d4b000"/></symbol>
  <symbol id="s-folder" viewBox="0 0 16 16"><path d="M1.500 2.500h5l1.500 2h6.500v9h-13z" fill="#efefef" stroke="#888"/></symbol>
  <symbol id="s-book" viewBox="0 0 16 16"><path d="M3 1.500h12v13H3z" fill="#d6d9dd"/><path d="M1.500 1h3v13h-3z" fill="#f2f2f2" stroke="#999" stroke-width=".7"/><path d="M8.500 1.500h3v6L10 9 8.500 7.500z" fill="#5b8bc0"/></symbol>
  <symbol id="s-phome" viewBox="0 0 16 16"><path d="M1.500 2.500h5l1.500 2h6.500v9h-13z" fill="#b9e468" stroke="#6a9a3a"/><path d="M2 13l5-4M3 5l6 5 5 3" stroke="#fff" fill="none"/><circle cx="9.500" cy="7" r="2.500" fill="#0f8a1f"/><path d="M9.500 12L8 8.500h3z" fill="#0f8a1f"/></symbol>
  <symbol id="s-home" viewBox="0 0 16 16"><path d="M1.500 2.500h5l1.500 2h6.500v9h-13z" fill="#efefef" stroke="#888"/><path d="M4.500 9.500L8 6l3.500 3.500h-1V12h-5V9.500z" fill="#fff" stroke="#333" stroke-width=".8"/></symbol>
  <symbol id="s-pg" viewBox="0 0 16 16"><path d="M2 1.500Q8-1 14 1.500q3 3 0 8l-3 .5q0 5-2 5.500-2 0-2-4.500l-2 .5q-3 0-4-5-.5-3 1-5z" fill="#5f86b5" stroke="#466a96" stroke-width=".6"/><path d="M5 3q2 3 0 7M10.500 3q1 4 0 7" stroke="#dce6f2" fill="none"/></symbol>
  <symbol id="s-mssql" viewBox="0 0 16 16"><path d="M1 1q9 0 14.500 5.500L15.500 9Q8 9 2 14.500 5 8 1 1z" fill="#5f86b5"/><path d="M5 1.500q3 4 1.500 9.500M9 3q2 3 1 6.500" stroke="#cfdcec" stroke-width=".7" fill="none"/></symbol>
  <symbol id="s-db2" viewBox="0 0 16 16"><rect width="16" height="15.500" rx="1.500" fill="#6d97c4"/><text x="1" y="10.500" class="glyph" font-size="6.500" fill="#fff">DB2</text></symbol>
  <symbol id="s-wms" viewBox="0 0 16 16"><ellipse cx="8" cy="8" rx="7.600" ry="6.800" fill="#a9c4e2" stroke="#4b7198" stroke-width=".8"/><path d="M2 5l3-2.500 3 1L6 6 5 9 3 8zM9 4l4-.5L14.500 7 12 9l-1 3-2-3z" fill="#4a6d96"/></symbol>
  <symbol id="s-conn" viewBox="0 0 16 16"><path d="M2.500 8H8q1-3.500 4.500-4M8 8q1 3.500 4.500 3.500" fill="none" stroke="#8a5a0a" stroke-width="1.800"/></symbol>
  <symbol id="s-vt" viewBox="0 0 16 16"><rect x="1.500" y="1.500" width="13" height="13" fill="#d4e0ee" stroke="#333f50" stroke-width="1.400"/><path d="M5.800 1v14M10.200 1v14M1 5.800h14M1 10.200h14" stroke="#333f50" stroke-width="1.400"/></symbol>
  <symbol id="s-xyz" viewBox="0 0 16 16"><path d="M1 3.200h14M1 8h14M1 12.800h14" stroke="#6d97c4" stroke-width="3.800" stroke-dasharray="4 1"/></symbol>
  <symbol id="s-wcs" viewBox="0 0 16 16"><ellipse cx="8" cy="8" rx="7.600" ry="6.500" fill="#8fb0d6" stroke="#2f4a69"/><path d="M1 5h14M1 11h14M5 2v12M11 2v12" stroke="#2f4a69" stroke-width="1.200"/><path d="M6 6.500h4v3H6z" fill="#fff"/></symbol>
  <symbol id="s-wfs" viewBox="0 0 16 16"><ellipse cx="8" cy="8" rx="7.600" ry="6.500" fill="#dde8f5" stroke="#7a9dc6"/><path d="M1 8h14M8 1.500v13" stroke="#a8c2e0"/><path d="M3.500 4l3 7.500L10 4h3.500" fill="none" stroke="#445" stroke-width="1"/></symbol>
  <symbol id="s-ows" viewBox="0 0 16 16"><ellipse cx="8" cy="8" rx="7.500" ry="6.500" fill="#f2f7fc" stroke="#7a9dc6"/><path d="M1 5.500h14M1 10.500h14M8 1.500v13" stroke="#8fb0d6" stroke-width=".8"/><ellipse cx="8" cy="8" rx="4" ry="6.500" fill="none" stroke="#8fb0d6"/></symbol>
  <symbol id="s-arc" viewBox="0 0 16 16"><use href="#s-wms"/><path d="M1 10h5v4H2z" fill="#fff"/><circle cx="4" cy="12" r="2" fill="#555"/></symbol>
  <symbol id="s-arcf" viewBox="0 0 16 16"><use href="#s-wfs"/><circle cx="4" cy="12" r="2.200" fill="#555"/></symbol>
  <symbol id="s-geonode" viewBox="0 0 16 16"><path d="M8 1.500v13M2.500 4.500l11 7M13.500 4.500l-11 7" stroke="#5f8cc0" stroke-width="2.800" stroke-linecap="round"/></symbol>
  <symbol id="s-brush" viewBox="0 0 16 16"><path d="M15 1l-6 5 2 2z" fill="#b07a40" stroke="#b07a40"/><path d="M5 6l4-2 4 4-2 3z" fill="#e03c28"/><path d="M1 6l4-1 6 6-2 3q-5 0-8-8z" fill="#f6a838"/><path d="M1 6l4-1 3 3-4 3z" fill="#fce07a"/></symbol>
  <symbol id="s-group" viewBox="0 0 16 16"><path d="M1.500 5.500h8v9h-8zM4 5V3h8v9h-2M7 3V1h6v9h-1" fill="none" stroke="#777"/><path d="M6 12V5" stroke="#456" stroke-width="1.500"/><rect x="10" y="10" width="5.500" height="5.500" rx="1" fill="#fff" stroke="#589660" stroke-width="1.400"/></symbol>
  <symbol id="s-eye" viewBox="0 0 16 16"><path d="M.5 8Q7.500-1 14.500 8 7.500 14 .5 8z" fill="#e4e8ee" stroke="#888"/><circle cx="7.500" cy="7" r="3.600" fill="#6d97c4" stroke="#456"/><circle cx="7.500" cy="7" r="1.300" fill="#123"/><path d="M11.500 13h4l-2 2.500z" fill="#555"/></symbol>
  <symbol id="s-eps" viewBox="0 0 16 16"><text x="1" y="9.500" class="glyph bold" font-size="15" fill="#7a4a80">ε</text><path d="M9 15v-4q0-2 3-2t3 2v4" fill="none" stroke="#aaa" stroke-width="1.500"/></symbol>
  <symbol id="s-rem" viewBox="0 0 16 16"><path d="M1.500 1.500h11.500v9M9 13.500h-7.500v-12" fill="none" stroke="#777" stroke-width="1.100"/><rect x="9" y="10.500" width="6.500" height="5" rx="1.500" fill="#e04050"/><path d="M10.500 13h3.500" stroke="#fff" stroke-width="1.300"/></symbol>
  <symbol id="s-chip" viewBox="0 0 17 17"><rect width="17" height="17" fill="#ececec"/><rect x="2.500" y="5.500" width="12" height="6" rx="1" fill="#f4f4f4" stroke="#777"/><path d="M4.500 3v4M7.500 3v4M10.500 3v4M13 3v4M4.500 10v4M7.500 10v4M10.500 10v4M13 10v4" stroke="#777"/></symbol>
  <symbol id="s-fchip" viewBox="0 0 17 17"><rect width="17" height="17" fill="#ececec"/><path d="M2.500 3h12L10 9v3.500l-3 2V9zM4 5h9" fill="#dfe6ee" stroke="#5a6f86"/></symbol>
  <symbol id="s-check" viewBox="0 0 14 14"><path d="M3.500 7.500L6 10.500 10.500 2.500" fill="none" stroke="#000" stroke-width="2"/></symbol>
  <symbol id="s-float" viewBox="0 0 12 12"><rect x=".5" y=".5" width="11" height="11" rx="2" fill="none" stroke="#777"/><path d="M5 4.500v-2h4.500V7h-2M2.500 5h4.500v4.500H2.500z" fill="none" stroke="#666"/></symbol>
  <symbol id="s-close" viewBox="0 0 12 12"><rect x=".5" y=".5" width="11" height="11" rx="2" fill="none" stroke="#777"/><path d="M3 3l6 6M9 3L3 9" stroke="#444" stroke-width="2"/></symbol>
</svg>

<div class="titlebar"></div>
<nav class="menubar">
  <span>Pro<u>j</u>eto</span><span><u>E</u>ditar</span><span><u>V</u>isão</span><span><u>C</u>amada</span><span><u>C</u>onfigurações</span><span><u>C</u>omplementos</span><span>Vet<u>o</u>r</span><span><u>R</u>aster</span><span><u>B</u>ase de dados</span><span><u>W</u>eb</span><span><u>M</u>alha</span><span>Pro<u>c</u>essar</span><span><u>A</u>juda</span>
</nav>

<div class="toolbar">
  <i class="grip first"></i>
  <svg class="tb"><use href="#i-new"/></svg><svg class="tb"><use href="#i-open"/></svg><svg class="tb"><use href="#i-save"/></svg><svg class="tb"><use href="#i-layout"/></svg><svg class="tb"><use href="#i-layoutmgr"/></svg><svg class="tb"><use href="#i-style"/></svg>
  <i class="grip"></i>
  <svg class="tb"><use href="#i-pan"/></svg><svg class="tb"><use href="#i-pansel"/></svg><svg class="tb"><use href="#i-zin"/></svg><svg class="tb"><use href="#i-zout"/></svg><svg class="tb"><use href="#i-zfull"/></svg><svg class="tb"><use href="#i-zsel"/></svg><svg class="tb"><use href="#i-zlayer"/></svg><svg class="tb off"><use href="#i-znative"/></svg><svg class="tb"><use href="#i-zlast"/></svg><svg class="tb off"><use href="#i-znext"/></svg><svg class="tb"><use href="#i-newmap"/></svg><svg class="tb"><use href="#i-new3d"/></svg><svg class="tb"><use href="#i-newbm"/></svg><svg class="tb"><use href="#i-bm"/></svg><svg class="tb"><use href="#i-clock"/></svg><svg class="tb"><use href="#i-refresh"/></svg>
  <i class="grip"></i>
  <svg class="tb"><use href="#i-info"/></svg><svg class="tb"><use href="#i-table"/></svg><svg class="tb"><use href="#i-abacus"/></svg><svg class="tb"><use href="#i-gear"/></svg><svg class="tb"><use href="#i-sum"/></svg><svg class="tb"><use href="#i-measure"/></svg><b class="drop"></b><svg class="tb"><use href="#i-tip"/></svg><svg class="tb off"><use href="#i-action"/></svg><b class="drop off"></b><svg class="tb"><use href="#i-text"/></svg><b class="drop"></b>
</div>

<div class="toolbar">
  <i class="grip first"></i>
  <svg class="tb"><use href="#i-dsm"/></svg><svg class="tb"><use href="#i-newgpkg"/></svg><svg class="tb"><use href="#i-shp"/></svg><svg class="tb"><use href="#i-newfeather"/></svg><svg class="tb"><use href="#i-mem"/></svg><i class="sep"></i><svg class="tb"><use href="#i-virtual"/></svg><i class="sep"></i>
  <i class="grip"></i>
  <svg class="tb off"><use href="#i-pencils"/></svg><svg class="tb"><use href="#i-pencil"/></svg><svg class="tb off"><use href="#i-savedit"/></svg><svg class="tb off"><use href="#i-points"/></svg><svg class="tb off"><use href="#i-vertex"/></svg><b class="drop off tight"></b><svg class="tb off"><use href="#i-multi"/></svg><svg class="tb off"><use href="#i-trash"/></svg><svg class="tb off"><use href="#i-cut"/></svg><svg class="tb off"><use href="#i-copy"/></svg><svg class="tb off"><use href="#i-paste"/></svg><svg class="tb off"><use href="#i-undo"/></svg><svg class="tb off"><use href="#i-redo"/></svg>
  <i class="grip"></i>
  <svg class="tb"><use href="#i-abc"/></svg><svg class="tb"><use href="#i-chart"/></svg><i class="sep"></i><svg class="tb"><use href="#i-pin"/></svg><svg class="tb"><use href="#i-unpl"/></svg><i class="sep"></i><svg class="tb off"><use href="#i-lpin"/></svg><svg class="tb off"><use href="#i-leye"/></svg><svg class="tb off"><use href="#i-lmove"/></svg><svg class="tb off"><use href="#i-lrot"/></svg><svg class="tb off"><use href="#i-ledit"/></svg>
  <i class="grip"></i>
  <svg class="tb"><use href="#i-webadd"/></svg><svg class="tb"><use href="#i-websearch"/></svg><svg class="tb"><use href="#i-bino"/></svg>
  <i class="grip"></i>
  <svg class="tb"><use href="#i-python"/></svg><svg class="tb"><use href="#i-earth"/></svg>
  <i class="grip"></i>
  <svg class="tb"><use href="#i-help"/></svg>
  <i class="grip"></i>
  <svg class="tb"><use href="#i-topo"/></svg><svg class="tb"><use href="#i-sheet"/></svg>
</div>

<div class="toolbar last">
  <i class="grip first"></i>
  <span class="pressed"><svg class="tb"><use href="#i-select"/></svg><b class="drop"></b></span>
  <svg class="tb"><use href="#i-selform"/></svg><b class="drop"></b><svg class="tb"><use href="#i-desel"/></svg><b class="drop"></b><svg class="tb"><use href="#i-selloc"/></svg>
  <i class="grip"></i><i class="grip"></i>
  <svg class="tb"><use href="#i-qms"/></svg><svg class="tb"><use href="#i-osm"/></svg>
</div>

<main class="workspace">
  <aside class="docks">
    <section class="dock browser">
      <header><h2>Navegador</h2><svg class="hb"><use href="#s-float"/></svg><svg class="hb"><use href="#s-close"/></svg></header>
      <div class="dock-tools"><svg><use href="#s-addl"/></svg><svg><use href="#i-refresh"/></svg><svg><use href="#s-filter"/></svg><svg><use href="#s-collapse"/></svg><svg><use href="#s-info"/></svg></div>
      <div class="tree-frame">
        <ul class="tree">
          <li><b class="tw open"></b><svg><use href="#s-star"/></svg><span>Favoritos</span></li>
          <li class="sub"><b class="tw"></b><svg><use href="#s-folder"/></svg><span>Module 2 - Data</span></li>
          <li><b class="tw"></b><svg><use href="#s-book"/></svg><span>Favoritos Espaciais</span></li>
          <li><b class="tw"></b><svg><use href="#s-phome"/></svg><span>Casa do projeto</span></li>
          <li><b class="tw"></b><svg><use href="#s-home"/></svg><span>Início</span></li>
          <li><b class="tw"></b><svg><use href="#s-folder"/></svg><span>/</span></li>
          <li><b class="tw"></b><svg><use href="#i-gpkg"/></svg><span>GeoPackage</span></li>
          <li><b class="tw none"></b><svg><use href="#i-feather"/></svg><span>SpatiaLite</span></li>
          <li><b class="tw none"></b><svg><use href="#s-pg"/></svg><span>PostGIS</span></li>
          <li><b class="tw none"></b><svg><use href="#s-mssql"/></svg><span>MSSQL</span></li>
          <li><b class="tw none"></b><svg><use href="#s-db2"/></svg><span>DB2</span></li>
          <li><b class="tw open"></b><svg><use href="#s-wms"/></svg><span>WMS/WMTS</span></li>
          <li class="sub"><b class="tw"></b><svg><use href="#s-conn"/></svg><span>Risco de inundação LiPAD 100 anos</span></li>
          <li><b class="tw none"></b><svg><use href="#s-vt"/></svg><span>Vector Tiles</span></li>
          <li><b class="tw open"></b><svg><use href="#s-xyz"/></svg><span>XYZ Tiles</span></li>
          <li class="sub"><b class="tw none"></b><svg><use href="#s-xyz"/></svg><span>ESRI World Imagery</span></li>
          <li class="sub"><b class="tw none"></b><svg><use href="#s-xyz"/></svg><span>OpenStreetMap</span></li>
          <li class="sub"><b class="tw none"></b><svg><use href="#s-xyz"/></svg><span>PGP Basemap</span></li>
          <li><b class="tw none"></b><svg><use href="#s-wcs"/></svg><span>WCS</span></li>
          <li><b class="tw none"></b><svg><use href="#s-wfs"/></svg><span>WFS / OGC API - Features</span></li>
          <li><b class="tw"></b><svg><use href="#s-ows"/></svg><span>OWS</span></li>
          <li><b class="tw none"></b><svg><use href="#s-arc"/></svg><span>Servidor de mapa do ArcGIS</span></li>
          <li><b class="tw none"></b><svg><use href="#s-geonode"/></svg><span>GeoNode</span></li>
          <li><b class="tw none"></b><svg><use href="#s-arcf"/></svg><span>Servidor de feição do ArcGIS</span></li>
        </ul>
        <div class="scrollbar"><i class="up"></i><i class="track"></i><i class="thumb"></i><i class="down"></i></div>
      </div>
    </section>
    <div class="splitter"></div>
    <section class="dock layers">
      <header><h2>Camadas</h2><svg class="hb"><use href="#s-float"/></svg><svg class="hb"><use href="#s-close"/></svg></header>
      <div class="dock-tools"><svg><use href="#s-brush"/></svg><svg><use href="#s-group"/></svg><svg><use href="#s-eye"/></svg><svg><use href="#s-filter"/></svg><svg><use href="#s-eps"/></svg><b class="drop"></b><svg><use href="#s-expand"/></svg><svg><use href="#s-collapse"/></svg><svg><use href="#s-rem"/></svg></div>
      <ul class="layer-list">
        <li><i class="cb"></i><i class="sw maroon"></i><span>Bordeada</span><svg class="ind"><use href="#s-chip"/></svg></li>
        <li><i class="cb"></i><i class="dot pink"></i><span>module8 pofw</span></li>
        <li class="selected"><i class="cb"><svg><use href="#s-check"/></svg></i><i class="dot olive"></i><span>pois_cleaned</span><svg class="ind"><use href="#s-chip"/></svg><svg class="ind"><use href="#s-fchip"/></svg></li>
        <li><i class="cb"></i><i class="dot green"></i><span>module8 pois</span></li>
        <li><i class="cb"></i><i class="line sand"></i><span>module8 road</span></li>
        <li><i class="cb"></i><i class="line rose"></i><span>module8 waterways</span></li>
        <li><i class="cb"></i><i class="sw lime"></i><span>Recortado</span><svg class="ind"><use href="#s-chip"/></svg></li>
        <li><i class="cb"></i><i class="sw coral"></i><span>module8 buildings</span></li>
        <li><i class="cb"></i><i class="sw purple"></i><span>module8 landuse</span></li>
        <li class="visible"><i class="cb"><svg><use href="#s-check"/></svg></i><i class="sw grey"></i><span>module8 limites_mun_recife</span></li>
      </ul>
    </section>
  </aside>
  <div class="vsplitter"></div>

  <div class="canvas">
    <svg class="map" viewBox="349 145 1569 844">
      <path class="limits" d="M789 140L789 145 786 153.300 791.700 160.700 796 165.300 799.300 170 803.300 170.700 806.700 169.300 810.700 165.700 820 165.700 825 161.700 829.300 161.300 836 164.700 841.700 164.700 845 170 849.300 174 853.300 176 859.300 181 867.300 182.300 876 187.300 880 192.300 884 196.700 888.700 196.700 892.700 192.700 897.300 193.300 901.700 191.300 907.300 194.300 910 196.700 914 203.300 920 203.300 940 209.700 942.700 211.300 950 212.300 956 214 957.300 216.700 958 220.700 952.700 228 954 233.300 953.700 240.700 955.700 246.700 954.300 250.700 949 255.300 947.700 261.700 946.300 268 950 274 953.700 279.300 944.300 356 953.300 407.700 939 401.300 936.700 408.300 934 412 928 412 900.700 442.300 896.700 439.300 894.700 437.700 892 439.300 885 439.700 880 447.300 879.300 453.700 870 461 861.700 463.700 854 469.700 849.300 467.300 842 459.300 836.700 451.700 823.300 450.300 822.300 453.700 813.700 455 813.300 460 812 463.300 813.300 470 820 479.300 823 485.300 825 494.300 821 500 818.700 507.700 729.300 546.700 733.300 546 738.300 549 740.700 549.300 746.300 555.300 747 561 750 561.700 754.300 560.300 759 565.300 770 563 771.700 567.700 777 575.300 782.300 575.700 786.300 581.300 796 580.300 800 576.300 804 575.300 813.700 567.300 815.300 569.300 816.700 574.300 825 574.300 822.300 580.300 824.700 590.700 829.300 591.700 836.700 601 840.300 603.300 839.300 610.300 854.300 613.300 852.700 624 856 624 859.300 626.700 862.700 626.700 865.300 630 875 628.300 880.700 631 882 638.300 888 640 888.700 644.700 892.700 649.700 896.700 644.300 900.700 643.700 904 640.300 911.300 640.700 910 645.300 914.700 655.700 912.700 664 909.300 668.700 903.700 672.700 905.700 678.300 911 681.300 916.700 678.700 920.700 686 925 688.300 927 693.700 936 694 940.700 701.700 933.300 706 934.700 707.700 944 702.300 948 704.700 951.700 704.700 952.700 708.700 949.300 714.300 950 726 947 729 947.300 746.700 945.700 757.300 947 764.300 951 769.300 956 772.700 968.300 777 962 779.300 959.300 790 962.700 800.700 957 809.300 960.700 822.700 955.300 834.300 955 841 964.700 852.300 967 852.300 971.300 848.700 975.300 849.700 979 839.300 982.300 828 985.300 833.300 986 842.700 989.300 854.700 968.700 870.700 971.700 884.700 976.700 883.300 982.700 888.300 985.300 888.300 989.700 887.300 990.700 884.300 992.700 884 996 887 1008.300 885 1021.700 885 1050 882 1053.300 886.700 1067.700 902.700 1090 900.300 1115 902.300 1135 912.300 1146.300 917 1143 927 1145.300 928.700 1144.700 931.700 1154.300 936 1150.700 945.700 1146.300 953.300 1151.700 954.700 1152.700 950.700 1155.300 951 1156 954.700 1165.300 958.300 1174 936.700 1184 914.700 1196 890.700 1200 878.300 1209.300 857.700 1216.700 842.300 1220.700 830.700 1230.700 814.300 1239.300 799 1246.700 789 1253.300 773.300 1269 743.300 1272.700 738.700 1278.300 726 1288.300 693.300 1294.300 674 1299 661.700 1304 651 1307.300 640 1320 612.700 1326.700 596 1335 579.300 1343.300 557.300 1353.300 535.700 1359.300 523.300 1362.700 520.300 1373 517.700 1367.300 506.700 1353.300 493.300 1306.700 453.300 1304 446 1306.700 434 1315.700 406.700 1317.700 394.700 1291.700 389.700 1290.300 383.300 1289.700 370 1281 361.300 1274.700 358.700 1268.300 350 1264.300 346.700 1258.700 345.300 1254 341.300 1249.300 340.300 1245 337.300 1238.300 337 1226 335 1218.300 329.300 1216 329 1211.300 331.300 1181.700 311 1178.700 304.700 1173.300 299.700 1169 292.700 1154.300 284 1139.300 272.700 1141 267.300 1142.300 266 1140.300 261 1143.300 256.700 1146.700 252.700 1152.300 249 1151.700 240 1155 203.300 1160.700 170 1165.300 145 1166 140z"/>
      <g class="pois">
        <circle cx="1163" cy="423" r="3.700"/><circle cx="1176" cy="445" r="3.700"/><circle cx="978" cy="452" r="3.700"/><circle cx="1030" cy="474" r="3.700"/><circle cx="1040" cy="475" r="3.700"/><circle cx="1026" cy="482" r="3.700"/><circle cx="1021" cy="491" r="3.700"/><circle cx="976" cy="494" r="3.700"/><circle cx="1006" cy="507" r="3.700"/><circle cx="1038" cy="511" r="3.700"/><circle cx="958" cy="519" r="3.700"/><circle cx="969" cy="519" r="3.700"/><circle cx="970" cy="520" r="3.700"/><circle cx="1032" cy="528" r="3.700"/><circle cx="1031" cy="531" r="3.700"/><circle cx="1077" cy="535" r="3.700"/><circle cx="1061" cy="547" r="3.700"/><circle cx="1124" cy="483" r="3.700"/>
        <circle cx="1212" cy="347" r="3.700"/><circle cx="1248" cy="347" r="3.700"/><circle cx="1213" cy="440" r="3.700"/><circle cx="1225" cy="447" r="3.700"/><circle cx="1222" cy="451" r="3.700"/><circle cx="1224" cy="451" r="3.700"/><circle cx="1225" cy="453" r="3.700"/><circle cx="1225" cy="452" r="3.700"/><circle cx="1199" cy="465" r="3.700"/><circle cx="1222" cy="465" r="3.700"/><circle cx="1199" cy="474" r="3.700"/><circle cx="1196" cy="476" r="3.700"/><circle cx="1187" cy="481" r="3.700"/><circle cx="1206" cy="480" r="3.700"/><circle cx="1207" cy="479" r="3.700"/><circle cx="1236" cy="484" r="3.700"/><circle cx="1161" cy="497" r="3.700"/><circle cx="1205" cy="497" r="3.700"/><circle cx="1164" cy="507" r="3.700"/><circle cx="1296" cy="517" r="3.700"/><circle cx="1090" cy="517" r="3.700"/><circle cx="1132" cy="525" r="3.700"/><circle cx="1183" cy="526" r="3.700"/><circle cx="1181" cy="526" r="3.700"/><circle cx="1197" cy="529" r="3.700"/><circle cx="1203" cy="524" r="3.700"/><circle cx="1249" cy="525" r="3.700"/><circle cx="1261" cy="539" r="3.700"/><circle cx="1256" cy="538" r="3.700"/><circle cx="1091" cy="539" r="3.700"/><circle cx="1092" cy="539" r="3.700"/><circle cx="1091" cy="543" r="3.700"/><circle cx="1124" cy="544" r="3.700"/><circle cx="1169" cy="549" r="3.700"/><circle cx="1165" cy="545" r="3.700"/><circle cx="1209" cy="551" r="3.700"/><circle cx="1206" cy="552" r="3.700"/><circle cx="1257" cy="558" r="3.700"/><circle cx="1198" cy="565" r="3.700"/><circle cx="1197" cy="563" r="3.700"/><circle cx="1197" cy="569" r="3.700"/><circle cx="1075" cy="562" r="3.700"/><circle cx="1093" cy="569" r="3.700"/><circle cx="1210" cy="577" r="3.700"/><circle cx="1252" cy="568" r="3.700"/><circle cx="1244" cy="572" r="3.700"/><circle cx="1171" cy="591" r="3.700"/><circle cx="1125" cy="627" r="3.700"/><circle cx="1169" cy="627" r="3.700"/>
        <circle cx="980" cy="669" r="3.700"/><circle cx="983" cy="673" r="3.700"/><circle cx="933" cy="690" r="3.700"/><circle cx="1001" cy="697" r="3.700"/><circle cx="1043" cy="711" r="3.700"/><circle cx="999" cy="859" r="3.700"/>
        <circle cx="1231" cy="643" r="3.700"/><circle cx="1082" cy="668" r="3.700"/><circle cx="1090" cy="669" r="3.700"/><circle cx="1160" cy="674" r="3.700"/><circle cx="1279" cy="670" r="3.700"/><circle cx="1068" cy="710" r="3.700"/><circle cx="1072" cy="725" r="3.700"/><circle cx="1134" cy="715" r="3.700"/><circle cx="1153" cy="713" r="3.700"/><circle cx="1135" cy="727" r="3.700"/><circle cx="1163" cy="744" r="3.700"/><circle cx="1225" cy="787" r="3.700"/><circle cx="1210" cy="806" r="3.700"/><circle cx="1210" cy="805" r="3.700"/><circle cx="1171" cy="828" r="3.700"/><circle cx="1171" cy="829" r="3.700"/><circle cx="1193" cy="828" r="3.700"/><circle cx="1175" cy="843" r="3.700"/><circle cx="1173" cy="851" r="3.700"/><circle cx="1167" cy="862" r="3.700"/><circle cx="1170" cy="859" r="3.700"/><circle cx="1173" cy="881" r="3.700"/><circle cx="1150" cy="887" r="3.700"/><circle cx="1148" cy="903" r="3.700"/><circle cx="1140" cy="912" r="3.700"/>
      </g>
    </svg>
  </div>
</main>

<footer class="status">
  <div class="field locator"><svg viewBox="0 0 16 16"><circle cx="6.500" cy="6.500" r="4" fill="none" stroke="#777" stroke-width="1.200"/><path d="M9.500 9.500l4 4" stroke="#777" stroke-width="1.500"/></svg><span>Escreva para localizar (Ctrl+K)</span></div>
  <span class="message">Adicionar à seleção atual</span>
  <span class="lbl coord">Coordenada</span>
  <div class="field coordbox">971180,9116197</div>
  <svg class="mouse" viewBox="0 0 18 18"><path d="M2 3l7 8M5 1.500l5 7M8.500 1.500l3.500 5M3 6l8-4M5 9l8-5" stroke="#444" stroke-width="1.200"/><ellipse cx="11" cy="12" rx="3.500" ry="4.500" transform="rotate(35 11 12)" fill="#f2f2f2" stroke="#333"/><path d="M3 16l12-13" stroke="#333" stroke-width="1.300"/></svg>
  <span class="lbl escala">Escala</span>
  <div class="field combo"><span>1:102185</span><i><b class="drop"></b></i></div>
  <svg class="lock" viewBox="0 0 14 16"><path d="M3.500 7V5a3.500 3.500 0 017 0v2" fill="none" stroke="#777" stroke-width="1.800"/><rect x="1" y="7" width="12" height="8" rx="1" fill="#5a5a5a"/></svg>
  <span class="lbl lupa">Lupa</span>
  <div class="field spin lupabox"><span>100%</span><i></i></div>
  <span class="lbl rot">Rotação</span>
  <div class="field spin rotbox"><span>0.0 °</span><i></i></div>
  <i class="cb render"><svg><use href="#s-check"/></svg></i>
  <span class="lbl rend">Renderizar</span>
  <svg class="crs" viewBox="0 0 16 16"><circle cx="8" cy="7" r="6" fill="#aaa" stroke="#666"/><path d="M2 5h12M2 9h12M8 1v12M4.500 2.500q-2 4.500 0 9M11.500 2.500q2 4.500 0 9" stroke="#666" fill="none"/><path d="M8 13v2M4 15h8" stroke="#666"/></svg>
  <span class="lbl epsg">EPSG:31984</span>
  <svg class="msg" viewBox="0 0 16 16"><path d="M8 1.500c4.500 0 7.500 2 7.500 5.300S13 12 11 12l2 3.500L8 12C3.500 12 .5 10 .5 6.800S3.500 1.500 8 1.500z" fill="#555"/><circle cx="4.500" cy="7" r="1" fill="#fff"/><circle cx="8" cy="7" r="1" fill="#fff"/><circle cx="11.500" cy="7" r="1" fill="#fff"/></svg>
</footer>
</body>
</html>
```

FILE: styles.css
```css
* { box-sizing: border-box; }

body {
  margin: 0;
  width: 1919px;
  height: 1021px;
  overflow: hidden;
  display: flex;
  flex-direction: column;
  background: #efefef;
  color: #111;
  font: 15.1px/19px "Ubuntu", "Noto Sans", "Open Sans", sans-serif;
}

.paints { position: absolute; }
.defs { display: none; }
.glyph { font-family: "Noto Sans", sans-serif; }
.glyph-serif { font-family: "Liberation Serif", serif; }
.bold { font-weight: 700; }
.it { font-style: italic; }

.titlebar { height: 5px; background: #2c2c2c; flex: none; }

.menubar {
  height: 22px;
  flex: none;
  display: flex;
  padding-left: 9px;
  gap: 14.5px;
  line-height: 22px;
  border-bottom: 1px solid #d0d0d0;
}
.menubar span { white-space: nowrap; }
.menubar u { text-underline-offset: 2px; text-decoration-thickness: 1px; }

/* toolbars */
.toolbar {
  height: 39px;
  flex: none;
  display: flex;
  align-items: center;
  background: linear-gradient(#f9f9f9, #ededed);
  border-bottom: 1px solid #b4b4b4;
}
.toolbar.last { height: 38px; }
.tb { width: 33px; height: 24px; flex: none; }
.off { opacity: .4; filter: saturate(.4); }
.grip {
  width: 16px;
  height: 17px;
  flex: none;
  background: radial-gradient(circle at 1px 1px, #b0b0b0 .7px, transparent 1px) 0 0 / 3px 3px;
  background-clip: content-box;
  padding: 0 3px 0 8px;
  background-origin: content-box;
}
.grip.first { width: 12px; padding: 0 4px; }
.sep { width: 7.5px; height: 20px; flex: none; border-right: 1px solid #ccc; margin-right: 3.5px; margin-left: -3.5px; }
.drop { width: 12px; height: 24px; flex: none; display: flex; align-items: center; padding-left: 1px; }
.drop.tight { width: 10px; }
.drop::after { content: ""; border: 4px solid transparent; border-top: 4px solid #555; border-bottom: 0; }
.pressed {
  display: flex;
  align-items: center;
  height: 31px;
  width: 44px;
  margin-right: 1px;
  background: #dadada;
  border: 1px solid #a8a8a8;
  border-radius: 3px;
}
.pressed .tb { width: 31px; height: 29px; padding: 2px 0; border-right: 1px solid #a8a8a8; }
.pressed .drop { padding-left: 2px; }

/* workspace */
.workspace { flex: 1; display: flex; min-height: 0; }
.docks { width: 342px; display: flex; flex-direction: column; }
.vsplitter {
  width: 3px;
  height: 18px;
  flex: none;
  align-self: center;
  margin: 0 1px 0 2px;
  background: radial-gradient(circle at 1px 1px, #aaa .7px, transparent 1px) 0 0 / 3px 3px;
}
.dock { width: 342px; display: flex; flex-direction: column; }
.browser { height: 507px; }
.layers { flex: 1; min-height: 0; }
.dock header { height: 22px; flex: none; display: flex; align-items: center; padding: 0 2px 0 3px; gap: 2px; }
.dock h2 { margin: 0; flex: 1; font-size: 15.1px; font-weight: 400; }
.hb { width: 12px; height: 12px; }
.dock-tools { height: 29px; flex: none; display: flex; align-items: center; gap: 9px; padding: 0 7px 3px; }
.dock-tools svg { width: 16px; height: 16px; flex: none; }
.dock-tools .drop { margin: 0 -5px 0 -5px; padding-left: 2px; }
.tree-frame { flex: 1; min-height: 0; display: flex; border: 1px solid #b4b4b4; border-left: 0; background: #fff; }
.tree { flex: 1; margin: 0; padding: 0; list-style: none; overflow: hidden; }
.tree li { height: 19px; display: flex; align-items: center; padding-left: 6px; white-space: nowrap; }
.tree li.sub { padding-left: 26px; }
.tree svg { width: 16px; height: 16px; margin-right: 6px; flex: none; }
.tw { width: 17px; flex: none; display: flex; }
.tw::after { content: ""; margin-left: 2px; border: 4px solid transparent; border-left: 4px solid #555; border-right: 0; }
.tw.open::after { margin-left: 0; border: 4px solid transparent; border-top: 4px solid #555; border-bottom: 0; }
.tw.none::after { display: none; }

.scrollbar { width: 14px; border-left: 1px solid #bbb; display: flex; flex-direction: column; background: #f7f7f7; }
.scrollbar i { display: flex; align-items: center; justify-content: center; flex: none; padding-right: 1px; }
.scrollbar .up, .scrollbar .down { height: 13px; }
.scrollbar .up { height: 14px; border-bottom: 1px solid #bbb; background: #fbfbfb; }
.scrollbar .up::after { content: ""; border: 4px solid transparent; border-bottom: 4px solid #555; border-top: 0; }
.scrollbar .down::after { content: ""; border: 4px solid transparent; border-top: 4px solid #555; border-bottom: 0; }
.scrollbar .track { flex: 1; background: linear-gradient(90deg, #eaeaea, #fafafa); }
.scrollbar .thumb { height: 19px; background: #e2e2e2; border: solid #bbb; border-width: 1px 0; }

.splitter {
  height: 5px;
  width: 18px;
  margin-left: 163px;
  background: radial-gradient(circle at 1px 1px, #aaa .7px, transparent 1px) 0 1px / 3px 3px repeat-x;
}

/* layer tree */
.layer-list { flex: 1; margin: 0; padding: 0; list-style: none; background: #fff; border: 1px solid #b4b4b4; border-left: 0; }
.layer-list li { height: 19px; display: flex; align-items: center; padding: 0 6px 0 23px; gap: 2px; color: #808080; font-weight: 700; font-style: italic; white-space: nowrap; }
.layer-list span { margin-right: auto; }
.cb { width: 14px; height: 14px; flex: none; background: #fff; border: 1px solid #b4b4b4; display: flex; }
.cb svg { width: 14px; height: 14px; margin: -1px; flex: none; }
.layer-list .cb { margin-right: 4px; }
.sw { width: 16px; height: 16px; flex: none; border: 1px solid #444; margin-right: 4.5px; }
.dot { width: 8px; height: 8px; border-radius: 50%; border: 1px solid #666; margin: 0 8.5px 0 4px; flex: none; }
.line { width: 16px; height: 2px; margin-right: 4.5px; flex: none; }
.ind { width: 17px; height: 17px; flex: none; }
.maroon { background: #8f0b0f; }
.lime { background: #60ff1e; }
.coral { background: #e96f8d; }
.purple { background: #8c5a9b; }
.grey { background: #d9d8d4; }
.pink { background: #e8909c; }
.olive { background: #a0a050; }
.green { background: #639a66; }
.sand { background: #ecdfa0; }
.rose { background: #dcc4ba; }
.layer-list .selected { background: #308cc6; color: #fff; font-style: normal; text-decoration: underline; }
.layer-list .visible { color: #000; font-style: normal; }

/* map canvas */
.canvas { flex: 1; margin-top: 1px; border: 1px solid #b4b4b4; border-right-color: #c8c8c8; background: #fff; overflow: hidden; }
.map { display: block; width: 1569px; height: 844px; }
.limits { fill: #d9d8d4; stroke: #232323; stroke-width: 1; }
.pois circle { fill: #d5b43c; stroke: #232323; stroke-opacity: .9; stroke-width: 1.1; }

/* status bar */
.status { height: 31px; flex: none; display: flex; align-items: center; padding: 0 0 0 3px; font-size: 12.1px; white-space: nowrap; }
.status svg { flex: none; }
.field { height: 25px; flex: none; background: #fff; border: 1px solid #ababab; border-radius: 3px; display: flex; align-items: center; }
.field span { flex: 1; }
.locator { width: 360px; padding-left: 5px; color: #848484; font-size: 15.1px; }
.locator svg { width: 16px; height: 16px; margin-right: 7px; }
.message { margin-left: 8px; width: 653px; }
.lbl { flex: none; }
.coord { width: 70px; }
.coordbox { width: 109px; padding-left: 8px; }
.mouse { width: 18px; height: 18px; margin-left: 4px; }
.escala { margin-left: 11px; width: 38px; }
.combo { width: 96px; padding-left: 4px; }
.combo i { width: 20px; height: 23px; border-left: 1px solid #ababab; display: flex; align-items: center; padding-left: 4px; background: #f7f7f7; }
.lock { width: 14px; height: 16px; margin-left: 12px; }
.lupa { margin-left: 8px; width: 30px; }
.spin { padding-left: 5px; }
.spin i { width: 14px; height: 23px; border-left: 1px solid #ababab; display: flex; flex-direction: column; align-items: center; justify-content: center; gap: 5px; background: #f7f7f7; }
.spin i::before { content: ""; border: 3px solid transparent; border-bottom: 4px solid #555; border-top: 0; }
.spin i::after { content: ""; border: 3px solid transparent; border-top: 4px solid #555; border-bottom: 0; }
.lupabox { width: 98px; }
.rot { margin-left: 9px; width: 54px; }
.rotbox { width: 94px; }
.render { margin-left: 6px; }
.rend { margin-left: 5px; width: 75px; }
.crs { width: 16px; height: 16px; }
.epsg { margin-left: 1px; width: 89px; }
.msg { width: 16px; height: 16px; }
```
